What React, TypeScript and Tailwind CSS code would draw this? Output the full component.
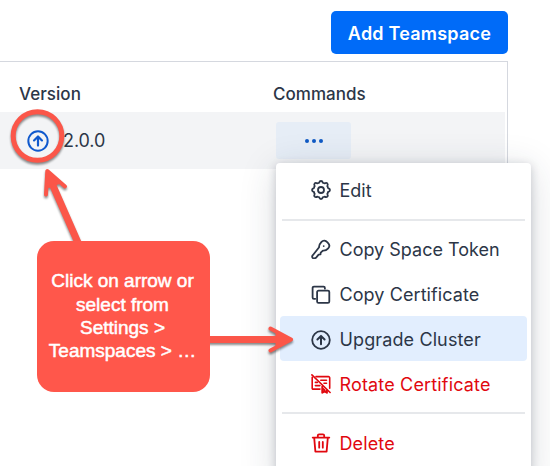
import type { ReactNode } from 'react';

function Icon({ children, className = 'size-5' }: { children: ReactNode; className?: string }) {
  return (
    <svg viewBox="0 0 20 20" fill="none" stroke="currentColor" strokeWidth="1.8" strokeLinecap="round" strokeLinejoin="round" className={`shrink-0 ${className}`}>
      {children}
    </svg>
  );
}

const UpCircle = () => (
  <>
    <circle cx="10" cy="10" r="8.8" />
    <path d="M10 14.2V6.2M6.4 9.5 10 5.9l3.6 3.6" strokeWidth="2" />
  </>
);

const Gear = () => (
  <>
    <path d="M10 1c1 0 1.5.5 1.9 1.8.7 0 1.2.2 1.7.6 1.3-.7 2-.7 2.7 0s.7 1.4 0 2.7c.4.5.6 1 .6 1.700C18.4 8.4 19 9 19 10s-.6 1.6-2.1 2.2c0 .7-.2 1.2-.6 1.7.7 1.3.7 2 0 2.7s-1.4.7-2.7 0c-.5.4-1 .6-1.7.6C11.5 18.5 11 19 10 19s-1.500-.5-1.900-1.800c-.7 0-1.2-.2-1.7-.6-1.3.7-2 .7-2.700 0s-.7-1.400 0-2.700c-.4-.5-.6-1-.6-1.700C1.600 11.600 1 11 1 10s.6-1.600 2.100-2.200c0-.7.2-1.200.6-1.700-.7-1.300-.7-2 0-2.700s1.400-.7 2.700 0c.5-.4 1-.6 1.700-.6C8.500 1.500 9 1 10 1Z" />
    <circle cx="10" cy="10" r="3" />
  </>
);

const Key = () => (
  <>
    <path d="M8.1 8.2C7.8 5.7 9 4.4 10.5 2.8c1.8-1.9 3.9-1.6 6 .5s2.4 4.4.7 6.1c-1.5 1.6-2.9 2.5-5.3 2.2l-2.2 2-.2 1.8-1.9.2-2.3 2.7c-1 1.1-2.4 1.2-3.6.7-.7-.9-.9-1.8.1-2.8z" />
    <circle cx="12.7" cy="7.1" r=".9" fill="currentColor" stroke="none" />
  </>
);

const Copy = () => (
  <>
    <rect x="6.1" y="5.7" width="12.2" height="12.2" rx="1.4" />
    <path d="M4.2 13.8H2.9a1.3 1.3 0 0 1-1.3-1.3V2.9a1.3 1.3 0 0 1 1.3-1.3h9.7a1.3 1.3 0 0 1 1.3 1.3v.8" />
  </>
);

const CertificateOff = () => (
  <>
    <path d="M5 2.6h12.5a1.2 1.2 0 0 1 1.2 1.2v10.4M1.2 3.2v11a.9.9 0 0 0 .9.9H9M9.8 6.2h5.7M4.4 8.4h2M4.4 11.6h4.500M13 9.2h2.5" strokeWidth="1.6" />
    <path d="m.9.9 18.2 17.6" strokeWidth="1.6" />
    <path d="M11.3 12.5v6.2l2.3-1.3 2.3 1.3v-2.4M11.6 14.5l2 1.8" strokeWidth="2" />
  </>
);

const Trash = () => (
  <>
    <path d="M1.7 4.6h16.6M3.2 4.8l1.2 13.9h11.2l1.2-13.9M6.8 4.3V2.6c0-.8.5-1.3 1.3-1.3h3.8c.8 0 1.3.5 1.3 1.3v1.7" />
    <path d="M8.2 9v5.7M11.8 9v5.7" />
  </>
);

function Item({ icon, label, className = '' }: { icon: ReactNode; label: string; className?: string }) {
  return (
    <button className={`flex h-[44.8px] w-full shrink-0 items-center gap-[9px] rounded pl-[30.5px] text-left whitespace-nowrap ${className}`}>
      <Icon>{icon}</Icon>
      <span>{label}</span>
    </button>
  );
}

const Separator = () => <div className="mx-0.5 my-[6px] h-[2px] shrink-0 bg-[#e6e8eb]" />;

export default function App() {
  return (
    <main className="relative h-[466px] w-[550px] overflow-hidden bg-white font-['Inter',sans-serif] text-[#2c3647]">
      <header className="flex h-[61px] justify-end pt-[11px] pr-[42px]">
        <button className="h-[43px] w-[177px] rounded-[5px] bg-[#006bf8] pt-px text-[18px] font-semibold tracking-[0.22px] text-white">Add Teamspace</button>
      </header>

      <section className="h-[405px] w-[508px] border-t border-r border-[#d5d8df]">
        <div className="grid h-[50px] grid-cols-[254px_1fr] pt-[19px] pl-[19px] text-[17px] leading-[26px] font-medium tracking-[0.04px]">
          <span>Version</span>
          <span>Commands</span>
        </div>
        <div className="mr-[2px] grid h-[57px] grid-cols-[249px_1fr] items-center bg-[#f3f4f6] pl-[27px] text-[18px]">
          <div className="flex items-center gap-[14px] tracking-[-0.1px]">
            <Icon className="size-[22px] text-[#1059cd]"><UpCircle /></Icon>
            <span>2.0.0</span>
          </div>
          <button className="flex h-[37px] w-[75px] items-center justify-center gap-[3px] rounded-[3px] bg-[#e6edf6]">
            <i className="size-[4px] rounded-full bg-[#1059c5]" />
            <i className="size-[4px] rounded-full bg-[#1059c5]" />
            <i className="size-[4px] rounded-full bg-[#1059c5]" />
          </button>
        </div>
      </section>

      <nav className="absolute top-[163px] left-[276px] flex h-[320px] w-[255px] flex-col rounded-t-[4px] bg-white px-1 pt-[5px] text-[18px] shadow-[0_6px_36px_rgba(35,45,65,0.17),0_2px_10px_rgba(35,45,65,0.22)]">
        <Item icon={<Gear />} label="Edit" />
        <Separator />
        <Item icon={<Key />} label="Copy Space Token" />
        <Item icon={<Copy />} label="Copy Certificate" className="pt-[1.5px] tracking-[0.08px]" />
        <Item icon={<UpCircle />} label="Upgrade Cluster" className="bg-[#e2eefe] pt-[1.5px] tracking-[0.12px]" />
        <Item icon={<CertificateOff />} label="Rotate Certificate" className="pt-[1.5px] tracking-[0.16px] text-[#e1080f]" />
        <Separator />
        <Item icon={<Trash />} label="Delete" className="pt-[2px] tracking-[0.12px] text-[#e1080f]" />
      </nav>

      <svg viewBox="0 0 550 466" fill="none" stroke="#fb5649" strokeLinecap="round" strokeLinejoin="round" className="pointer-events-none absolute inset-0 h-full w-full drop-shadow-[0.5px_2px_1px_rgba(0,0,0,0.45)]">
        <circle cx="37.5" cy="136" r="24.3" strokeWidth="5" />
        <path d="M79 245 50.500 180" strokeWidth="7" />
        <path d="M65 186.500 47.300 171 46 194.500" strokeWidth="4" />
        <path d="M47.300 171 59 183 48.500 187Z" fill="#fb5649" strokeWidth="2" />
        <path d="M205 339.5H284" strokeWidth="7" />
        <path d="M270.500 328.500 291 339.500 270.500 350.500" strokeWidth="4" />
        <path d="M290 339.500 276 333V346Z" fill="#fb5649" strokeWidth="1" />
      </svg>
      <aside className="absolute top-[241px] left-[36.5px] flex h-[151px] w-[173px] items-center justify-center rounded-[17px] bg-[#ff574b] pr-px pb-[1px] text-center font-['Liberation_Sans',sans-serif] text-[19px] leading-[23.3px] text-white [-webkit-text-stroke:0.5px_white]">
        <p>Click on arrow or<br />select from<br />Settings &gt;<br />Teamspaces &gt; …</p>
      </aside>
    </main>
  );
}
